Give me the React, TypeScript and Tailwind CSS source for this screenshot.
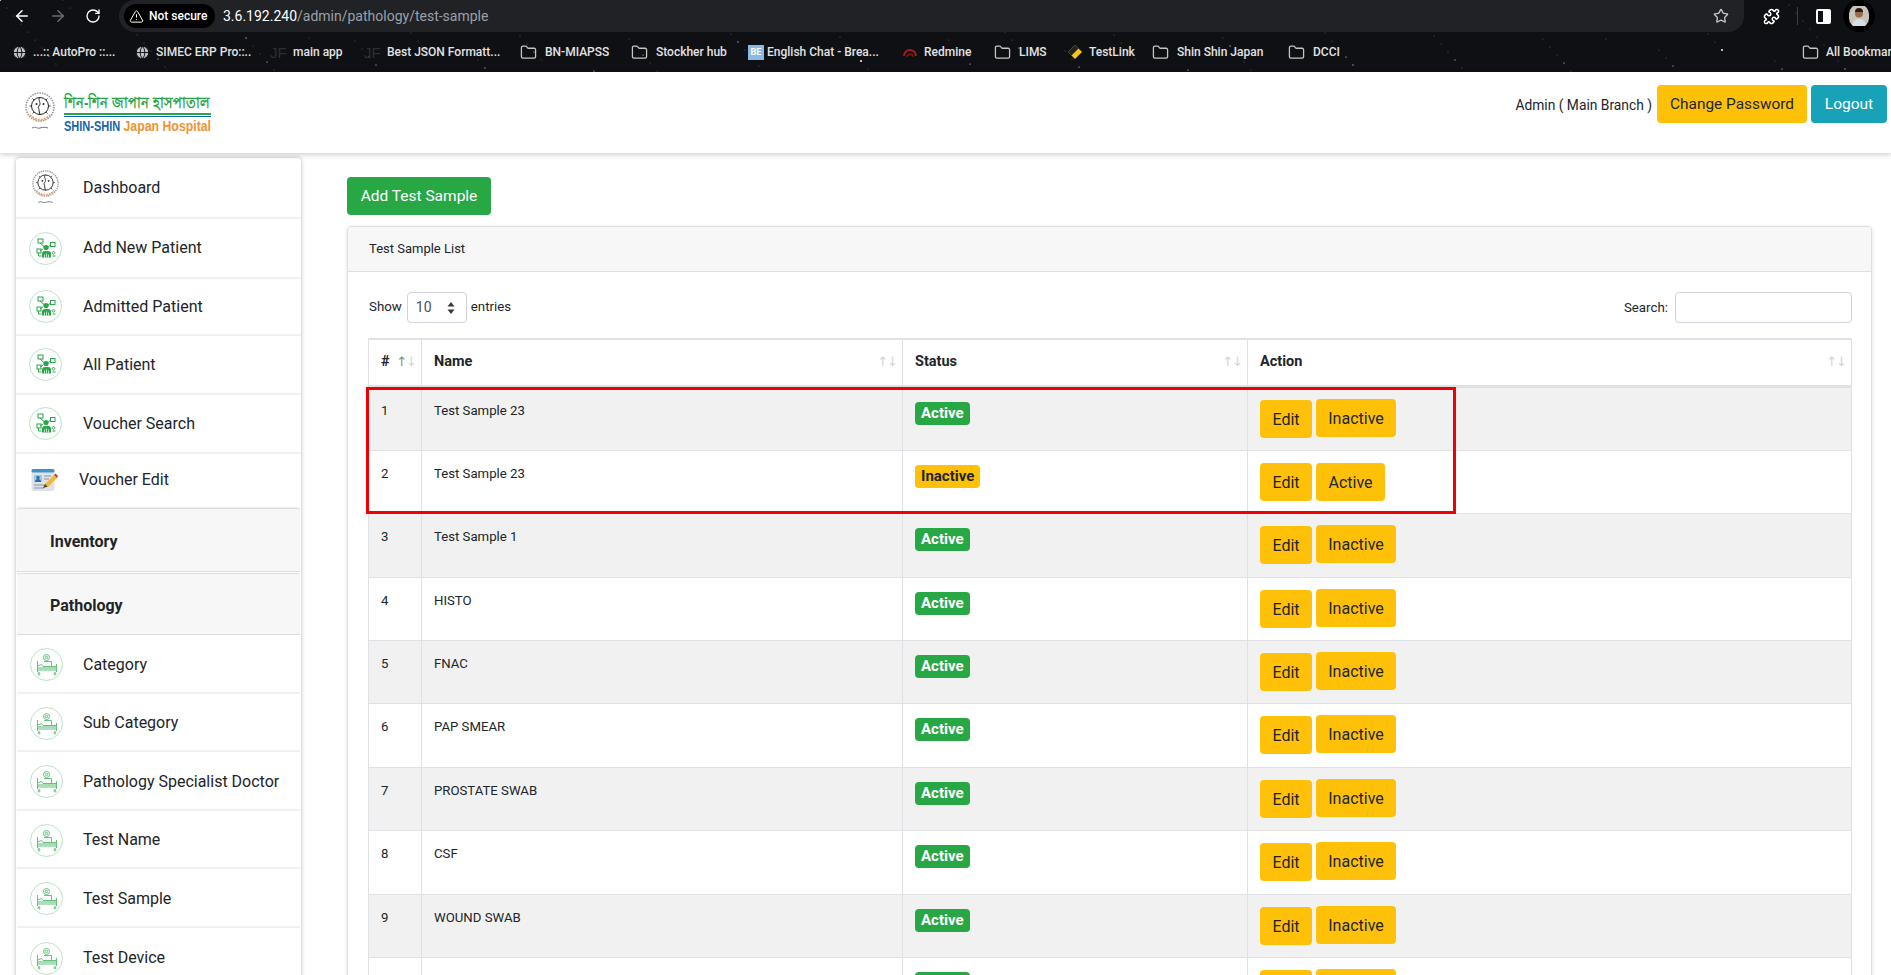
import { ArrowLeft, ArrowRight, RotateCw, TriangleAlert, Star, Puzzle, Folder, Globe } from "lucide-react";

// fixed star field for the browser theme
const stars = Array.from({ length: 170 }, (_, i) => ({
  x: (i * 7919) % 1891,
  y: (i * 104729) % 72,
  r: i % 11 === 0 ? 1.1 : 0.6,
  o: i % 7 === 0 ? 0.9 : 0.3,
}));

function Emblem({ className }: { className: string }) {
  return (
    <svg viewBox="0 0 30 40" className={className}>
      <circle cx="15" cy="15" r="14" fill="none" stroke="#9a9a9a" strokeWidth="1.6" strokeDasharray="1.5 1" />
      <path d="M5 23a13 13 0 0 0 20 0" fill="none" stroke="#f0a070" strokeWidth="2" strokeDasharray="2 1" />
      <circle cx="15" cy="14" r="8.5" fill="none" stroke="#222" strokeWidth="1" />
      <path d="M15 5.500c-3 3 2 5-1 8.500-2 2 1 3 0 5l1 3.500" fill="none" stroke="#222" strokeWidth="1" />
      <path d="M4.500 14h2M23.500 14h2M7.500 6.500l1.500 1.500M22.500 6.500L21 8M7.500 21.500L9 20M22.500 21.500L21 20" stroke="#333" strokeWidth="0.9" />
      <circle cx="11.500" cy="12" r="1" fill="#222" />
      <circle cx="18.500" cy="12" r="1" fill="#222" />
      <path d="M7 36c4-2 5 1 8 0s5-1 8 0" fill="none" stroke="#666" strokeWidth="0.9" />
    </svg>
  );
}

function PatientIcon() {
  return (
    <svg viewBox="0 0 33 33" className="w-[33px] h-[33px] shrink-0">
      <circle cx="16.500" cy="16.500" r="16" fill="#fff" stroke="#a8dcb4" strokeWidth="0.8" />
      <g fill="none" stroke="#2aa64a" strokeWidth="1">
        <rect x="9" y="7" width="5" height="4" />
        <rect x="21.500" y="10.500" width="4.500" height="4" />
        <rect x="8" y="17" width="4" height="4" />
        <path d="M11 11l4 3.500M21.500 13L19 15M11 19l3-2M9.500 21v3h3M24.500 19.500a1.300 1.300 0 1 0 .1 0zM23.500 24h3" />
      </g>
      <circle cx="17" cy="15.500" r="2.600" fill="#2aa64a" />
      <path d="M13 25.500v-3.500a3 3 0 0 1 3-3h3a3 3 0 0 1 3 3v3.500z" fill="#2aa64a" />
      <path d="M15.500 25.500v-3M17.500 25.500v-4M19.500 25.500v-3" stroke="#fff" strokeWidth="0.7" />
    </svg>
  );
}

function BedIcon() {
  return (
    <svg viewBox="0 0 33 33" className="w-[33px] h-[33px] shrink-0">
      <circle cx="16.500" cy="16.500" r="16" fill="#fff" stroke="#a8dcb4" strokeWidth="0.8" />
      <g fill="none" stroke="#55b970" strokeWidth="0.9">
        <circle cx="16.500" cy="9.500" r="3" />
        <circle cx="16.500" cy="9.500" r="1.200" />
        <path d="M7.500 13v11M26.500 16v8M7.500 18l4-1.500 1.500 2h13M7.500 22h19" />
        <path d="M14 13.500h7.500v4.500M9 24v1M25 24v1" />
        <circle cx="9" cy="26" r="1" />
        <circle cx="25" cy="26" r="1" />
      </g>
      <rect x="8" y="19" width="18" height="2.500" fill="#a8dcb4" />
    </svg>
  );
}

function VoucherIcon() {
  return (
    <svg viewBox="0 0 27 24" className="w-[27px] h-[24px] shrink-0">
      <rect x="0.500" y="1" width="23" height="22" rx="2.500" fill="#dfe3e8" />
      <rect x="0.500" y="1" width="23" height="3.500" rx="1.500" fill="#3d93c9" />
      <rect x="3" y="7" width="8" height="7" fill="#9cc7e6" />
      <circle cx="7" cy="9.500" r="1.700" fill="#2f6ea3" />
      <path d="M4 14a3 3 0 0 1 6 0z" fill="#2f6ea3" />
      <path d="M13 8h7M13 11h5M3 17h12M3 20h10" stroke="#8795a3" strokeWidth="1" />
      <path d="M12 20l2-4 9-9 3 3-9 9z" fill="#f3b637" />
      <path d="M23 7l1.500-1.500 2.500 2.500-1 2z" fill="#c9392f" />
      <path d="M12 20l2-4 2.500 2.500z" fill="#444" />
    </svg>
  );
}

function FolderIcon() {
  return <Folder className="w-[17px] h-[17px] mr-[2px] text-[#c4c7c5] shrink-0" strokeWidth={1.8} />;
}

function GlobeIcon() {
  return <Globe className="w-[15px] h-[15px] text-[#0e1013] fill-[#bfc2c5] shrink-0" strokeWidth={1.5} />;
}

function JfIcon() {
  return <span className="w-[17px] text-[15px] leading-none text-[#2c2e31] shrink-0 font-['Liberation_Sans',sans-serif]">JF</span>;
}

const bookmarks = [
  { label: "...:: AutoPro ::...", icon: <GlobeIcon />, box: "w-[135px] pl-[12px]" },
  { label: "SIMEC ERP Pro::..", icon: <GlobeIcon />, box: "w-[135px]" },
  { label: "main app", icon: <JfIcon />, box: "w-[94px]" },
  { label: "Best JSON Formatt...", icon: <JfIcon />, box: "w-[156px]" },
  { label: "BN-MIAPSS", icon: <FolderIcon />, box: "w-[111px]" },
  { label: "Stockher hub", icon: <FolderIcon />, box: "w-[117px]" },
  {
    label: "English Chat - Brea...",
    icon: <span className="w-[16px] h-[15px] -mr-[3px] bg-[#8ab8e8] text-[9px] leading-[15px] text-center text-white font-bold shrink-0">BE</span>,
    box: "w-[154px]",
  },
  {
    label: "Redmine",
    icon: (
      <svg viewBox="0 0 16 16" className="w-[16px] h-[16px] shrink-0">
        <path d="M2 12a6 6 0 0 1 12 0" fill="none" stroke="#a51c1c" strokeWidth="2" />
        <path d="M5 13a3 3 0 0 1 6 0" fill="none" stroke="#7a1010" strokeWidth="1.500" />
      </svg>
    ),
    box: "w-[92px]",
  },
  { label: "LIMS", icon: <FolderIcon />, box: "w-[73px]" },
  {
    label: "TestLink",
    icon: (
      <svg viewBox="0 0 16 16" className="w-[16px] h-[16px] shrink-0">
        <path d="M8 1l7 7-7 7-7-7z" fill="#f5c518" />
        <path d="M8 1l3.500 3.500L8 8 4.500 11.500 1 8z" fill="#222" />
      </svg>
    ),
    box: "w-[85px]",
  },
  { label: "Shin Shin Japan", icon: <FolderIcon />, box: "w-[136px]" },
  { label: "DCCI", icon: <FolderIcon />, box: "w-[60px]" },
];

const topItems = [
  { label: "Dashboard", h: "h-[61px]" },
  { label: "Add New Patient", h: "h-[60px]" },
  { label: "Admitted Patient", h: "h-[57px]" },
  { label: "All Patient", h: "h-[59px]" },
  { label: "Voucher Search", h: "h-[59px]" },
];

const pathologyItems = [
  { label: "Category", h: "h-[59px]" },
  { label: "Sub Category", h: "h-[58px]" },
  { label: "Pathology Specialist Doctor", h: "h-[59px]" },
  { label: "Test Name", h: "h-[58px]" },
  { label: "Test Sample", h: "h-[59px]" },
  { label: "Test Device", h: "h-[60px]" },
];

const rows = [
  { id: "1", name: "Test Sample 23", active: true },
  { id: "2", name: "Test Sample 23", active: false },
  { id: "3", name: "Test Sample 1", active: true },
  { id: "4", name: "HISTO", active: true },
  { id: "5", name: "FNAC", active: true },
  { id: "6", name: "PAP SMEAR", active: true },
  { id: "7", name: "PROSTATE SWAB", active: true },
  { id: "8", name: "CSF", active: true },
  { id: "9", name: "WOUND SWAB", active: true },
  { id: "", name: "", active: true },
];

function SortArrows({ active }: { active?: boolean }) {
  return (
    <span className="absolute right-[5px] top-[14px] text-[13px] leading-[16px] tracking-[-1px] font-normal font-['DejaVu_Sans',sans-serif] text-[#d4d4d4]">
      <span className={active ? "text-[#8a8a8a]" : ""}>↑</span>↓
    </span>
  );
}

function YellowButton({ children, className }: { children: string; className: string }) {
  return (
    <button className={"h-[38px] pt-[2px] rounded-[4px] bg-[#ffc107] text-[#212529] text-[16px] shrink-0 " + className}>
      {children}
    </button>
  );
}

export default function App() {
  return (
    <div className="w-[1891px] h-[975px] overflow-hidden bg-white text-[#212529] font-['Roboto',sans-serif]">
      {/* browser chrome */}
      <div className="relative h-[72px] bg-[#0e1013] overflow-hidden">
        <svg className="absolute inset-0 w-full h-full" viewBox="0 0 1891 72">
          {stars.map((s, i) => (
            <circle key={i} cx={s.x} cy={s.y} r={s.r} fill="#fff" opacity={s.o} />
          ))}
        </svg>
        <div className="relative h-[32px] flex items-center">
          <ArrowLeft className="ml-[13px] w-[18px] h-[18px] text-white" strokeWidth={2} />
          <ArrowRight className="ml-[18px] w-[18px] h-[18px] text-[#6b6e70]" strokeWidth={2} />
          <RotateCw className="ml-[18px] w-[16px] h-[16px] text-white" strokeWidth={2} />
          <div className="ml-[18px] w-[1625px] h-[32px] bg-[#202226] rounded-b-[16px] rounded-tl-[16px] flex items-center">
            <div className="ml-[5px] w-[91px] h-[24px] rounded-full bg-black flex items-center text-white text-[12px] font-medium">
              <TriangleAlert className="ml-[5px] mr-[5px] w-[15px] h-[15px]" strokeWidth={1.6} />
              Not secure
            </div>
            <span className="ml-[8px] text-[14px] text-white">
              3.6.192.240<span className="text-[#9aa0a6]">/admin/pathology/test-sample</span>
            </span>
            <Star className="ml-auto mr-[15px] w-[16px] h-[16px] text-[#c4c7c5]" strokeWidth={2} />
          </div>
          <Puzzle className="ml-[19px] w-[17px] h-[17px] text-white" strokeWidth={2.2} />
          <div className="ml-[17px] w-px h-[18px] bg-[#3c3f42]" />
          <div className="ml-[18px] w-[15px] h-[15px] rounded-[2px] border-2 border-white flex justify-end">
            <div className="w-[6px] bg-white" />
          </div>
          <div className="ml-[12px] w-[32px] h-[32px] rounded-full bg-black flex items-center justify-center">
            <svg viewBox="0 0 20 20" className="w-[20px] h-[24px] rounded-full">
              <rect width="20" height="20" fill="#c9c4b8" />
              <circle cx="10" cy="7.500" r="4" fill="#9a6a4e" />
              <path d="M6 6a4 4 0 0 1 8 0z" fill="#2a1d18" />
              <path d="M3 20a7 7 0 0 1 14 0z" fill="#d5dee6" />
            </svg>
          </div>
        </div>
        <div className="relative h-[40px] flex items-center text-[12px] font-medium text-[#e3e3e3]">
          {bookmarks.map((b) => (
            <div key={b.label} className={"flex items-center gap-[6px] shrink-0 whitespace-nowrap " + b.box}>
              {b.icon}
              {b.label}
            </div>
          ))}
          <div className="ml-[438px] w-px h-[20px] bg-[#3c3f42]" />
          <div className="ml-[16px] flex items-center gap-[5px] whitespace-nowrap">
            <FolderIcon />
            All Bookmarks
          </div>
        </div>
      </div>

      {/* app header */}
      <header className="relative z-10 h-[81px] bg-white shadow-[0_2px_5px_rgba(0,0,0,0.18)] flex items-start">
        <div className="ml-[25px] mt-[20px] flex items-start gap-[9px]">
          <Emblem className="w-[30px] h-[40px]" />
          <div className="w-[147px] whitespace-nowrap font-['Liberation_Sans',sans-serif]">
            <div className="h-[21px] leading-[21px] text-[13px] font-bold text-[#2aa64a] scale-y-[1.25]">শিন-শিন জাপান হাসপাতাল</div>
            <div className="h-[1.500px] bg-[#2aa64a]" />
            <div className="mt-px h-[1.500px] bg-[#1565b0]" />
            <div className="mt-[2px] flex justify-between items-baseline h-[15px] leading-[15px] text-[11px] font-bold scale-y-[1.25]">
              <span className="text-[#1565b0]">SHIN-SHIN</span>
              <span className="text-[12.300px] text-[#ee9433]">Japan Hospital</span>
            </div>
          </div>
        </div>
        <div className="ml-auto mt-[13px] flex items-start">
          <span className="mt-[10px] mr-[5px] text-[13.800px] text-[#212529] whitespace-nowrap">Admin ( Main Branch )</span>
          <button className="w-[150px] h-[38px] pt-[2px] rounded-[4px] bg-[#ffc107] text-[#212529] text-[15.400px]">Change Password</button>
          <button className="ml-[4px] mr-[4px] w-[76px] h-[38px] pt-[2px] rounded-[4px] bg-[#17a2b8] text-white text-[15.500px]">Logout</button>
        </div>
      </header>

      <div className="flex items-start">
        {/* sidebar */}
        <aside className="ml-[16px] mt-[5px] w-[285px] shrink-0 bg-white rounded-t-[4px] shadow-[0_0_4px_rgba(0,0,0,0.3)]">
          {topItems.map((item, i) => (
            <div key={item.label} className={"flex items-center border-b-2 border-[#f1f1f1] " + item.h}>
              {i === 0 ? (
                <div className="w-[33px] ml-[13px] flex justify-center shrink-0">
                  <Emblem className="w-[27px] h-[36px]" />
                </div>
              ) : (
                <div className="ml-[13px] flex shrink-0">
                  <PatientIcon />
                </div>
              )}
              <span className="ml-[21px] text-[16px] text-[#212529]">{item.label}</span>
            </div>
          ))}
          <div className="flex items-center h-[54px] pb-[2px]">
            <div className="ml-[15px]">
              <VoucherIcon />
            </div>
            <span className="ml-[21px] text-[16px] text-[#212529]">Voucher Edit</span>
          </div>
          <div className="mx-px h-[64px] pt-[4px] flex items-center pl-[33px] bg-[#f7f7f7] border-y border-[#dcdcdc] rounded-t-[3px] shadow-[0_-1px_2px_rgba(0,0,0,0.08)] text-[16px] font-bold">
            Inventory
          </div>
          <div className="mx-px mt-[1px] h-[62px] pt-[4px] flex items-center pl-[33px] bg-[#f7f7f7] border-y border-[#dcdcdc] rounded-t-[3px] text-[16px] font-bold">
            Pathology
          </div>
          {pathologyItems.map((item) => (
            <div key={item.label} className={"mx-px pt-[2px] flex items-center border-b-2 border-[#f1f1f1] " + item.h}>
              <div className="ml-[13px] flex shrink-0">
                <BedIcon />
              </div>
              <span className="ml-[20px] text-[16px] text-[#212529]">{item.label}</span>
            </div>
          ))}
        </aside>

        {/* content */}
        <main className="ml-[46px] w-[1525px] shrink-0 pt-[24px]">
          <button className="w-[144px] h-[38px] pt-[2px] rounded-[4px] bg-[#28a745] text-white text-[15.500px]">Add Test Sample</button>
          <section className="mt-[11px] border border-[#dfdfdf] rounded-[4px] shadow-[0_1px_4px_rgba(0,0,0,0.12)]">
            <div className="h-[45px] pl-[21px] flex items-center bg-[#f7f7f7] border-b border-[#dfdfdf] text-[13px] rounded-t-[4px]">
              Test Sample List
            </div>
            <div className="pl-[20px] pr-[19px] pt-[20px]">
              <div className="flex items-center h-[31px] text-[13.300px]">
                <span className="ml-px pb-[2px]">Show</span>
                <div className="ml-[5px] w-[60px] h-[31px] border border-[#ced4da] rounded-[4px] flex items-center pl-[8px] text-[14px] text-[#495057]">
                  10
                  <svg viewBox="0 0 8 12" className="ml-[15px] w-[8px] h-[12px]">
                    <path d="M4 0l3.500 4.500h-7zM4 12L.5 7.500h7z" fill="#343a40" />
                  </svg>
                </div>
                <span className="ml-[4px] pb-[2px]">entries</span>
                <span className="ml-auto mr-[7px]">Search:</span>
                <div className="w-[177px] h-[31px] border border-[#ced4da] rounded-[4px]" />
              </div>
              <div className="relative mt-[15px]">
                <table className="w-[1484px] table-fixed border-collapse text-[13.200px]">
                  <colgroup>
                    <col className="w-[53px]" />
                    <col className="w-[481px]" />
                    <col className="w-[345px]" />
                    <col />
                  </colgroup>
                  <thead>
                    <tr className="h-[47px] border-t-2 border-b-[3px] border-[#dee2e6]">
                      {["#", "Name", "Status", "Action"].map((title, i) => (
                        <th key={title} className="relative border-x border-[#dee2e6] pl-[12px] text-left text-[14.500px] font-bold">
                          {title}
                          <SortArrows active={i === 0} />
                        </th>
                      ))}
                    </tr>
                  </thead>
                  <tbody>
                    {rows.map((row, i) => (
                      <tr key={i} className={"border-b border-[#dee2e6] " + (i === 0 ? "h-[64.400px] " : "h-[63.400px] ") + (i % 2 === 0 ? "bg-[#f1f1f1]" : "bg-white")}>
                        <td className="align-top pt-[12px] pl-[12px] border-x border-[#dee2e6] leading-[21px]">{row.id}</td>
                        <td className="align-top pt-[12px] pl-[12px] border-x border-[#dee2e6] leading-[21px]">{row.name}</td>
                        <td className="align-top pt-[14px] pl-[12px] border-x border-[#dee2e6]">
                          <span
                            className={
                              "inline-block h-[23px] leading-[22px] px-[6px] rounded-[4px] text-[15px] font-bold " +
                              (row.active ? "bg-[#28a745] text-white" : "bg-[#ffc107] text-[#212529]")
                            }
                          >
                            {row.active ? "Active" : "Inactive"}
                          </span>
                        </td>
                        <td className="align-top pt-[12px] pl-[12px] border-x border-[#dee2e6]">
                          <div className="flex items-start gap-[4px]">
                            <YellowButton className="w-[52px]">Edit</YellowButton>
                            {row.active ? (
                              <YellowButton className="w-[80px] -mt-px">Inactive</YellowButton>
                            ) : (
                              <YellowButton className="w-[69px]">Active</YellowButton>
                            )}
                          </div>
                        </td>
                      </tr>
                    ))}
                  </tbody>
                </table>
                {/* annotation drawn over the first two rows */}
                <div className="absolute left-[-2px] top-[49px] w-[1090px] h-[127px] border-[3px] border-[#f00000] pointer-events-none" />
              </div>
            </div>
          </section>
        </main>
      </div>
    </div>
  );
}
